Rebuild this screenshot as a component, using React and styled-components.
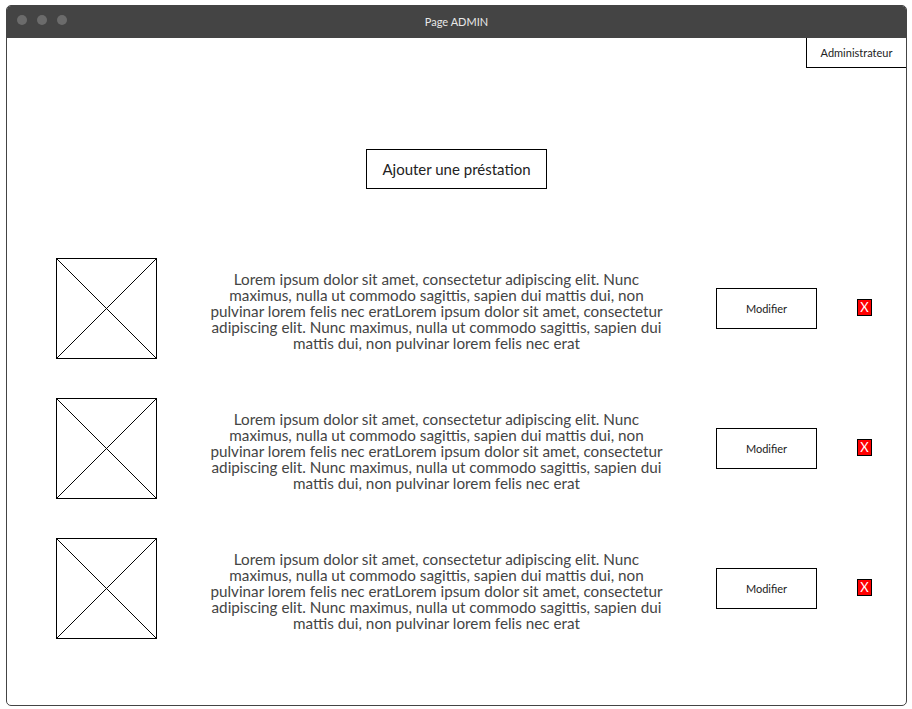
import styled, { createGlobalStyle } from "styled-components";

const GlobalStyle = createGlobalStyle`
    body {
        margin: 0;
        background: #fff;
        font-family: Lato, "Liberation Sans", sans-serif;
    }
`;

const LOREM =
    "Lorem ipsum dolor sit amet, consectetur adipiscing elit. Nunc maximus, nulla ut commodo sagittis, sapien dui mattis dui, non pulvinar lorem felis nec eratLorem ipsum dolor sit amet, consectetur adipiscing elit. Nunc maximus, nulla ut commodo sagittis, sapien dui mattis dui, non pulvinar lorem felis nec erat";

const items = [1, 2, 3];

const Placeholder = () => (
    <ImageBox>
        <svg width="100" height="100" viewBox="0 0 100 100">
            <line x1="0" y1="0" x2="100" y2="100" stroke="#000" strokeWidth="1" />
            <line x1="100" y1="0" x2="0" y2="100" stroke="#000" strokeWidth="1" />
        </svg>
    </ImageBox>
);

const App = () => {
    return (
        <>
            <GlobalStyle />
            <Window>
                <TitleBar>
                    <Dots>
                        <Dot />
                        <Dot />
                        <Dot />
                    </Dots>
                    <Title>Page ADMIN</Title>
                </TitleBar>
                <Content>
                    <TopBar>
                        <AdminBox>Administrateur</AdminBox>
                    </TopBar>
                    <AddButton>Ajouter une préstation</AddButton>
                    <List>
                        {items.map(id => (
                            <Row key={id}>
                                <Placeholder />
                                <Description>{LOREM}</Description>
                                <EditButton>Modifier</EditButton>
                                <DeleteButton>X</DeleteButton>
                            </Row>
                        ))}
                    </List>
                </Content>
            </Window>
        </>
    );
};

const Window = styled.div`
    margin: 5px 0 0 6px;
    width: 901px;
    height: 701px;
    box-sizing: border-box;
    border: 1px solid #444;
    border-radius: 5px;
    overflow: hidden;
    display: flex;
    flex-direction: column;
    background: #fff;
`;

const TitleBar = styled.div`
    position: relative;
    height: 32px;
    flex-shrink: 0;
    background: #444;
    display: flex;
    align-items: center;
    justify-content: center;
`;

const Dots = styled.div`
    position: absolute;
    left: 10px;
    top: 9px;
    display: flex;
    gap: 10px;
`;

const Dot = styled.span`
    width: 10px;
    height: 10px;
    border-radius: 50%;
    background: #6b6b6b;
`;

const Title = styled.span`
    color: #e8e8e8;
    font-size: 11px;
    margin-top: -2px;
`;

const Content = styled.div`
    flex: 1;
    display: flex;
    flex-direction: column;
    align-items: center;
`;

const TopBar = styled.div`
    align-self: stretch;
    display: flex;
    justify-content: flex-end;
`;

const AdminBox = styled.div`
    width: 100px;
    height: 30px;
    box-sizing: border-box;
    border: 1px solid #000;
    border-right: none;
    border-top: none;
    display: flex;
    align-items: center;
    justify-content: center;
    font-size: 11px;
    color: #222;
`;

const AddButton = styled.button`
    margin-top: 81px;
    width: 181px;
    height: 40px;
    box-sizing: border-box;
    border: 1px solid #000;
    background: #fff;
    font-family: inherit;
    font-size: 15px;
    color: #222;
    cursor: pointer;
`;

const List = styled.div`
    margin-top: 69px;
    align-self: stretch;
    display: flex;
    flex-direction: column;
    gap: 39px;
`;

const Row = styled.div`
    display: flex;
    align-items: center;
    height: 101px;
    padding-left: 49px;
`;

const ImageBox = styled.div`
    width: 101px;
    height: 101px;
    box-sizing: border-box;
    border: 1px solid #000;
    overflow: hidden;
    flex-shrink: 0;

    svg {
        display: block;
        width: 100%;
        height: 100%;
    }
`;

const Description = styled.p`
    margin: 4px 19px 0 19px;
    width: 521px;
    padding: 0 27px;
    box-sizing: border-box;
    text-align: center;
    font-size: 15.25px;
    line-height: 16px;
    color: #444;
`;

const EditButton = styled.button`
    width: 101px;
    height: 41px;
    box-sizing: border-box;
    border: 1px solid #000;
    background: #fff;
    font-family: inherit;
    font-size: 11px;
    color: #222;
    cursor: pointer;
`;

const DeleteButton = styled.button`
    margin-left: 40px;
    margin-top: -3px;
    width: 15px;
    height: 17px;
    padding: 0;
    box-sizing: border-box;
    border: 1px solid #000;
    background: #f00;
    color: #fff;
    font-family: inherit;
    font-size: 13px;
    line-height: 1;
    cursor: pointer;
`;

export default App;
